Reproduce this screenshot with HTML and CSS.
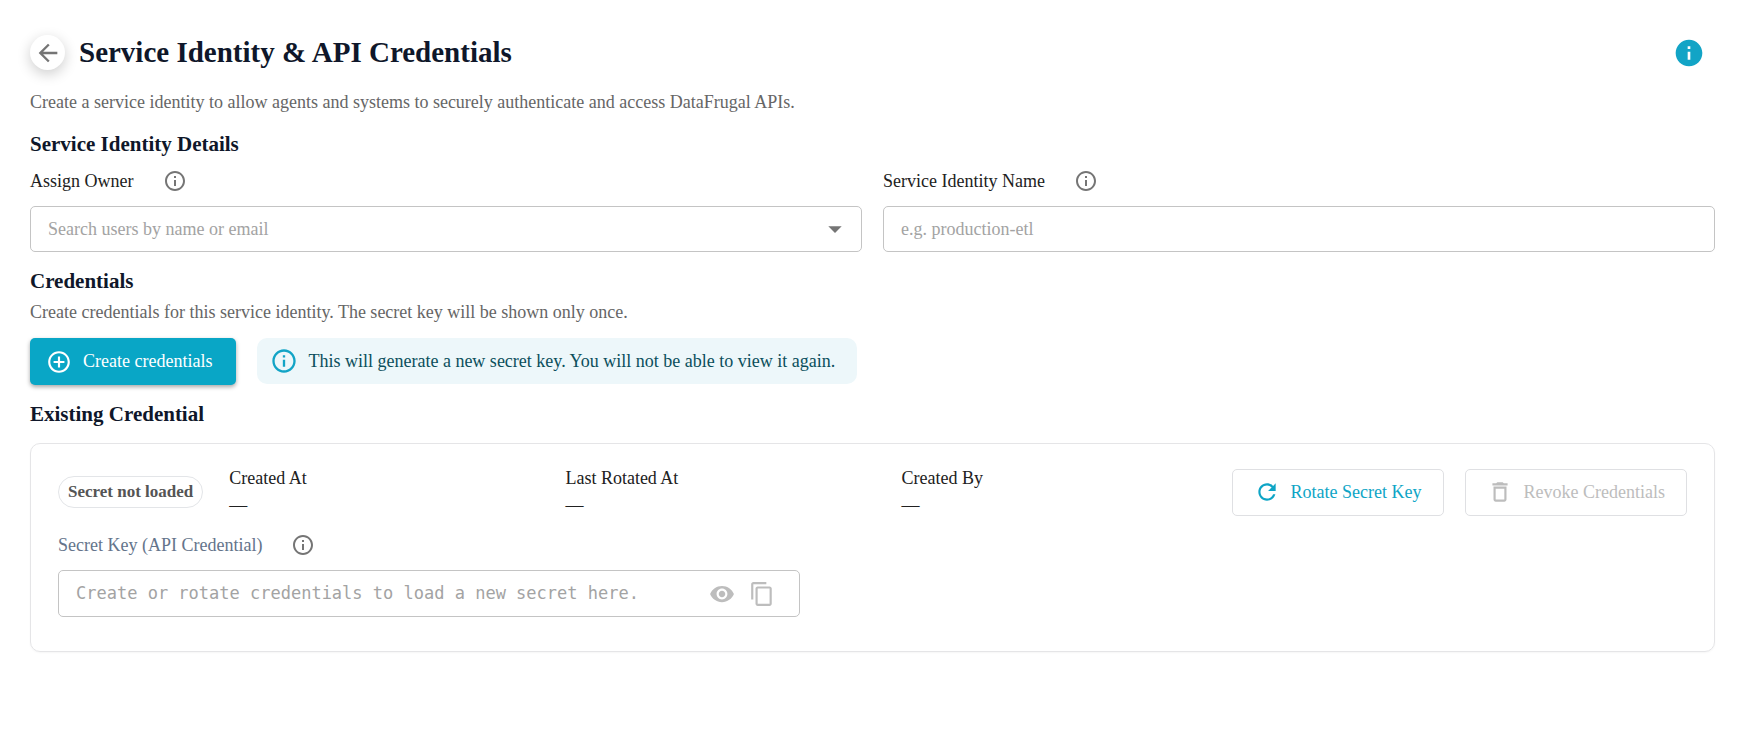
FILE: index.html
```html
<!DOCTYPE html>
<html lang="en">
<head>
    <meta charset="UTF-8">
    <meta name="viewport" content="width=device-width, initial-scale=1.0">
    <title>Service Identity &amp; API Credentials</title>
    <link rel="stylesheet" href="styles.css">
</head>
<body>
    <!-- shared icons -->
    <svg class="sprite" aria-hidden="true">
        <symbol id="info-outline" viewBox="0 0 24 24">
            <path d="M11 7h2v2h-2zm0 4h2v6h-2zm1-9C6.48 2 2 6.48 2 12s4.48 10 10 10 10-4.48 10-10S17.52 2 12 2zm0 18c-4.41 0-8-3.59-8-8s3.59-8 8-8 8 3.59 8 8-3.59 8-8 8z"/>
        </symbol>
    </svg>

    <main class="page">
        <header class="page-header">
            <button type="button" class="back-button" aria-label="Back">
                <svg class="icon icon-medium" viewBox="0 0 24 24"><path d="M20 11H7.83l5.59-5.59L12 4l-8 8 8 8 1.41-1.41L7.83 13H20v-2z"/></svg>
            </button>
            <h1>Service Identity &amp; API Credentials</h1>
            <button type="button" class="help-button" aria-label="Help">
                <svg class="icon icon-large" viewBox="0 0 24 24"><path d="M12 2C6.48 2 2 6.48 2 12s4.48 10 10 10 10-4.48 10-10S17.52 2 12 2zm1 15h-2v-6h2v6zm0-8h-2V7h2v2z"/></svg>
            </button>
        </header>
        <p class="intro">Create a service identity to allow agents and systems to securely authenticate and access DataFrugal APIs.</p>

        <section class="details">
            <h2>Service Identity Details</h2>
            <div class="field-grid">
                <div class="field">
                    <div class="label-row">
                        <label for="owner">Assign Owner</label>
                        <button type="button" class="info-button" aria-label="About owner"><svg class="icon icon-small"><use href="#info-outline"/></svg></button>
                    </div>
                    <div class="input-box">
                        <input type="text" id="owner" role="combobox" aria-expanded="false" placeholder="Search users by name or email">
                        <button type="button" class="icon-button arrow-button" aria-label="Open">
                            <svg class="icon icon-large" viewBox="0 0 24 24"><path d="M7 10l5 5 5-5z"/></svg>
                        </button>
                    </div>
                </div>
                <div class="field">
                    <div class="label-row">
                        <label for="identityName">Service Identity Name</label>
                        <button type="button" class="info-button" aria-label="About name"><svg class="icon icon-small"><use href="#info-outline"/></svg></button>
                    </div>
                    <div class="input-box">
                        <input type="text" id="identityName" placeholder="e.g. production-etl">
                    </div>
                </div>
            </div>
        </section>

        <section class="credentials">
            <h2>Credentials</h2>
            <p class="description">Create credentials for this service identity. The secret key will be shown only once.</p>
            <div class="create-row">
                <button type="button" class="btn btn-primary">
                    <svg class="icon" viewBox="0 0 24 24"><path d="M13 7h-2v4H7v2h4v4h2v-4h4v-2h-4V7zm-1-5C6.48 2 2 6.48 2 12s4.48 10 10 10 10-4.48 10-10S17.52 2 12 2zm0 18c-4.41 0-8-3.59-8-8s3.59-8 8-8 8 3.59 8 8-3.59 8-8 8z"/></svg>
                    Create credentials
                </button>
                <div class="notice">
                    <svg class="icon icon-medium"><use href="#info-outline"/></svg>
                    <span>This will generate a new secret key. You will not be able to view it again.</span>
                </div>
            </div>
        </section>

        <section class="existing">
            <h2>Existing Credential</h2>
            <div class="card">
                <div class="card-row">
                    <span class="chip">Secret not loaded</span>
                    <dl class="facts">
                        <div>
                            <dt>Created At</dt>
                            <dd>—</dd>
                        </div>
                        <div>
                            <dt>Last Rotated At</dt>
                            <dd>—</dd>
                        </div>
                        <div>
                            <dt>Created By</dt>
                            <dd>—</dd>
                        </div>
                    </dl>
                    <div class="actions">
                        <button type="button" class="btn btn-outline">
                            <svg class="icon" viewBox="0 0 24 24"><path d="M17.65 6.35C16.2 4.9 14.21 4 12 4c-4.42 0-7.99 3.58-7.99 8s3.57 8 7.99 8c3.73 0 6.84-2.55 7.73-6h-2.08c-.82 2.33-3.04 4-5.65 4-3.31 0-6-2.69-6-6s2.69-6 6-6c1.66 0 3.14.69 4.22 1.78L13 11h7V4l-2.35 2.35z"/></svg>
                            Rotate Secret Key
                        </button>
                        <button type="button" class="btn btn-outline" disabled>
                            <svg class="icon" viewBox="0 0 24 24"><path d="M6 19c0 1.1.9 2 2 2h8c1.1 0 2-.9 2-2V7H6v12zM8 9h8v10H8V9zm7.5-5l-1-1h-5l-1 1H5v2h14V4z"/></svg>
                            Revoke Credentials
                        </button>
                    </div>
                </div>
                <div class="label-row secret-label">
                    <label for="secret">Secret Key (API Credential)</label>
                    <button type="button" class="info-button" aria-label="About secret key"><svg class="icon icon-small"><use href="#info-outline"/></svg></button>
                </div>
                <div class="input-box secret-box">
                    <input type="text" id="secret" placeholder="Create or rotate credentials to load a new secret here." readonly>
                    <button type="button" class="icon-button" aria-label="Show secret" disabled>
                        <svg class="icon" viewBox="0 0 24 24"><path d="M12 4.5C7 4.5 2.73 7.61 1 12c1.73 4.39 6 7.5 11 7.5s9.27-3.11 11-7.5c-1.73-4.39-6-7.5-11-7.5zM12 17c-2.76 0-5-2.24-5-5s2.24-5 5-5 5 2.24 5 5-2.24 5-5 5zm0-8c-1.66 0-3 1.34-3 3s1.34 3 3 3 3-1.34 3-3-1.34-3-3-3z"/></svg>
                    </button>
                    <button type="button" class="icon-button" aria-label="Copy secret" disabled>
                        <svg class="icon" viewBox="0 0 24 24"><path d="M16 1H4c-1.1 0-2 .9-2 2v14h2V3h12V1zm3 4H8c-1.1 0-2 .9-2 2v14c0 1.1.9 2 2 2h11c1.1 0 2-.9 2-2V7c0-1.1-.9-2-2-2zm0 16H8V7h11v14z"/></svg>
                    </button>
                </div>
            </div>
        </section>
    </main>
</body>
</html>
```
FILE: styles.css
```css
* {
    box-sizing: border-box;
}
body {
    margin: 0;
    background-color: #fff;
    color: #212121;
    font-family: "Liberation Serif", "Times New Roman", serif;
    font-size: 18px;
    line-height: 27px;
}
h1, h2, p, dl, dd {
    margin: 0;
}
h1, h2 {
    color: #0f172a;
    font-weight: bold;
}
h1 {
    font-size: 29px;
    line-height: 35px;
}
h2 {
    font-size: 21px;
    line-height: 30px;
}
button, input {
    font: inherit;
}
button {
    padding: 0;
    border: none;
    background: none;
    cursor: pointer;
}
button:disabled {
    cursor: default;
}

.sprite {
    display: none;
}
.icon {
    display: block;
    flex-shrink: 0;
    width: 26px;
    height: 26px;
    fill: currentColor;
}
.icon-small {
    width: 24px;
    height: 24px;
}
.icon-medium {
    width: 28px;
    height: 28px;
}
.icon-large {
    width: 32px;
    height: 32px;
}

.page {
    padding: 35px 28px 35px 30px;
}
.page-header {
    display: flex;
    align-items: center;
    gap: 14px;
}
.back-button {
    display: flex;
    align-items: center;
    justify-content: center;
    width: 35px;
    height: 35px;
    border-radius: 50%;
    background-color: #fff;
    color: #757575;
    box-shadow: 0 4px 14px rgba(0, 0, 0, 0.2);
}
.help-button {
    margin-left: auto;
    margin-right: 10px;
    color: #12a4c6;
}
.intro,
.description {
    color: #666;
}
.intro {
    margin-top: 19px;
}

.details {
    margin-top: 13px;
}
.field-grid {
    display: grid;
    grid-template-columns: 1fr 1fr;
    gap: 21px;
    margin-top: 10px;
}
.label-row {
    display: flex;
    align-items: center;
    gap: 29px;
    height: 24px;
    margin-bottom: 13px;
}
.info-button {
    color: #757575;
}
.input-box {
    display: flex;
    align-items: center;
    gap: 14px;
    height: 46px;
    padding: 0 17px;
    border: 1px solid #c4c4c4;
    border-radius: 5px;
}
.input-box input {
    flex: 1;
    min-width: 0;
    padding: 0;
    border: none;
    outline: none;
    background: none;
    color: #212121;
}
.input-box input::placeholder {
    color: #a3a3a3;
    opacity: 1;
}
.icon-button {
    color: #757575;
}
.icon-button:disabled {
    color: #bdbdbd;
}
.arrow-button {
    margin-right: -7px;
}

.credentials {
    margin-top: 14px;
}
.description {
    margin-top: 3px;
}
.create-row {
    display: flex;
    align-items: flex-start;
    gap: 21px;
    margin-top: 12px;
}
.btn {
    display: flex;
    align-items: center;
    height: 47px;
    border-radius: 5px;
    white-space: nowrap;
}
.btn-primary {
    gap: 11px;
    padding: 0 24px 0 16px;
    background-color: #09a6c6;
    color: #fff;
    box-shadow: 0 2px 4px rgba(0, 0, 0, 0.35);
}
.btn-outline {
    gap: 11px;
    padding: 0 21px;
    border: 1px solid #dfe0e3;
    color: #0ea5c6;
}
.btn-outline:disabled {
    color: #bdbdbd;
}
.notice {
    display: flex;
    align-items: center;
    gap: 10px;
    height: 46px;
    padding: 0 22px 0 13px;
    border-radius: 10px;
    background-color: #edf7fa;
    color: #0b4f5c;
}
.notice .icon {
    color: #12a4c6;
}

.existing {
    margin-top: 14px;
}
.card {
    margin-top: 14px;
    padding: 21px 27px 34px;
    border: 1px solid #e5e5e7;
    border-radius: 10px;
    box-shadow: 0 1px 2px rgba(0, 0, 0, 0.04);
}
.card-row {
    display: flex;
    align-items: center;
    gap: 26px;
}
.chip {
    padding: 0 9px;
    border: 1px solid #e3e5e8;
    border-radius: 16px;
    color: #555;
    font-size: 17px;
    font-weight: bold;
    line-height: 30px;
    white-space: nowrap;
}
.facts {
    flex: 1;
    display: grid;
    grid-template-columns: repeat(3, 1fr);
    gap: 32px;
}
.actions {
    display: flex;
    gap: 21px;
}
.secret-label {
    margin-top: 14px;
    color: #64748b;
}
.secret-box {
    width: 100%;
    max-width: 742px;
    height: 47px;
    padding-right: 24px;
}
.secret-box input {
    font-family: Consolas, "DejaVu Sans Mono", monospace;
    font-size: 17px;
}
```
